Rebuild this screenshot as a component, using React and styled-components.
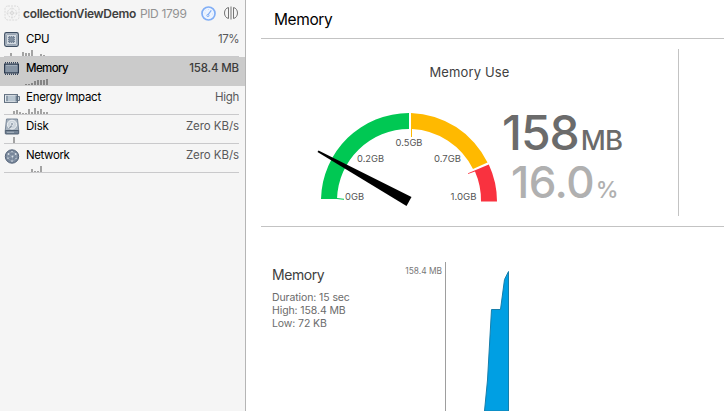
import React from "react";
import styled, { createGlobalStyle } from "styled-components";

const GlobalStyle = createGlobalStyle`
  * { box-sizing: border-box; }
  body { margin: 0; background: #fff; font-family: Inter, "Liberation Sans", sans-serif; overflow: hidden; }
  svg { display: block; }
`;

const Window = styled.div`
  display: grid;
  grid-template-columns: 246px 1fr;
  width: 724px;
  height: 411px;
  overflow: hidden;
  background: #fff;
`;

const Sidebar = styled.aside`
  background: #f5f5f5;
  border-right: 1px solid #b5b5b5;
`;

const ProcessHeader = styled.header`
  display: flex;
  align-items: center;
  height: 28px;
  padding: 0 6px 2px 4px;
  white-space: nowrap;
`;

const ProcessName = styled.strong`
  margin-left: 3px;
  font-size: 12px;
  font-weight: 600;
  letter-spacing: -0.33px;
  color: #404040;
`;

const ProcessId = styled.span`
  margin-left: 4px;
  font-size: 12px;
  letter-spacing: -0.33px;
  color: #929292;
`;

const HeaderActions = styled.div`
  display: flex;
  align-items: center;
  gap: 7px;
  margin-left: auto;
`;

const GaugeRow = styled.div`
  height: 29px;
  padding: 0 6px 0 4px;
  background: ${(p) => (p.$selected ? "#cbcbcb" : "transparent")};
`;

const RowBody = styled.div`
  display: grid;
  grid-template-columns: 22px 1fr auto;
  grid-template-rows: 22px 7px;
  height: 29px;
  border-bottom: 1px solid ${(p) => (p.$selected ? "transparent" : "#c9c9cb")};
`;

const RowIcon = styled.div`
  padding-top: ${(p) => p.$top}px;
  height: 22px;
`;

const RowLabel = styled.span`
  font-size: 11.5px;
  line-height: 23px;
  font-weight: ${(p) => (p.$selected ? 500 : 400)};
  letter-spacing: ${(p) => p.$spacing}px;
  color: #000;
`;

const RowValue = styled(RowLabel)`
  color: ${(p) => (p.$selected ? "#3c3c3c" : "#58585a")};
`;

const History = styled.svg`
  grid-column: 1 / -1;
  height: 6px;
`;

const Main = styled.main`
  display: flex;
  flex-direction: column;
  padding-left: 15px;
  min-width: 0;
`;

const TitleBar = styled.header`
  height: 39px;
  padding-left: 13px;
  border-bottom: 1px solid #c3c3c3;
  font-size: 15.5px;
  line-height: 39px;
  letter-spacing: -0.4px;
  color: #000;
`;

const Overview = styled.section`
  display: grid;
  grid-template-columns: 418px 1fr;
  height: 188px;
  padding: 10px 0;
  border-bottom: 1px solid #c3c3c3;
`;

const UsagePanel = styled.div`
  display: grid;
  grid-template-columns: 242px 1fr;
  grid-template-rows: 46px 1fr;
  border-right: 1px solid #c3c3c3;
`;

const PanelTitle = styled.h2`
  grid-column: 1 / -1;
  margin: 0;
  font-size: 13px;
  font-weight: 400;
  line-height: 46px;
  letter-spacing: 0.15px;
  text-align: center;
  color: #414141;
`;

const Readout = styled.div`
  display: flex;
  flex-direction: column;
  padding-top: 13px;
`;

const Figure = styled.div`
  display: flex;
  align-items: baseline;
  height: ${(p) => p.$line}px;
  margin-left: ${(p) => p.$indent}px;
  font-size: ${(p) => p.$size}px;
  font-weight: 450;
  line-height: ${(p) => p.$line}px;
  letter-spacing: ${(p) => p.$spacing}px;
  color: ${(p) => p.$color};
`;

const Unit = styled.span`
  margin-left: ${(p) => p.$gap}px;
  font-size: ${(p) => p.$size}px;
  letter-spacing: ${(p) => p.$spacing}px;
`;

const Timeline = styled.section`
  display: grid;
  grid-template-columns: 119px 54px 1fr;
  padding-top: 35px;
  padding-left: 11px;
  height: 184px;
`;

const Summary = styled.div`
  padding-top: 3px;
  font-size: 10.5px;
  line-height: 13px;
  letter-spacing: -0.1px;
  color: #6b6b6b;
`;

const SummaryTitle = styled.h3`
  margin: 0 0 6px;
  font-size: 14px;
  font-weight: 400;
  line-height: 20px;
  letter-spacing: -0.45px;
  color: #404040;
`;

const AxisLabel = styled.div`
  padding-right: 3px;
  font-size: 8.4px;
  line-height: 19px;
  text-align: right;
  white-space: nowrap;
  color: #777;
`;

const TargetIcon = () => (
  <svg width="16" height="18" viewBox="0 0 16 18" fill="none" stroke="#dadada">
    <rect x="1" y="2" width="14" height="14" rx="3" strokeDasharray="2 1" />
    <circle cx="8" cy="9" r="4.5" strokeDasharray="2 1" />
    <path d="M8 3v12M2 9h12" strokeWidth=".6" />
    <circle cx="8" cy="9" r="1.6" />
  </svg>
);

const DialIcon = () => (
  <svg width="15" height="15" viewBox="0 0 15 15" fill="none">
    <circle cx="7.5" cy="7.5" r="6.5" fill="#edf4ff" stroke="#81aef5" strokeWidth="1.7" />
    <path d="M10.3 4.4L7.1 8.7" stroke="#81aef5" strokeWidth="1.2" />
    <circle cx="6.9" cy="9.5" r="1.1" stroke="#81aef5" />
    <path d="M3.5 7h1M7.5 3v1M4.5 4.5l.6.6M11 8h1" stroke="#bdd4f8" strokeWidth=".7" />
  </svg>
);

const SplitIcon = () => (
  <svg width="16" height="14" viewBox="0 0 16 14" fill="none" stroke="#747474" strokeWidth="1">
    <path d="M5.500 1.500C3.200 2 1.500 4 1.500 7s1.700 5 4 5.500zM10.500 1.500c2.300.5 4 2.500 4 5.500s-1.700 5-4 5.500zM8 .5v13" />
  </svg>
);

const CpuIcon = () => (
  <svg width="15" height="15" viewBox="0 0 15 15">
    <rect x=".7" y=".7" width="13.600" height="13.600" rx="1.500" fill="#c4ced8" stroke="#3e4e62" strokeWidth="1.200" />
    <rect x="2.500" y="2.500" width="10" height="10" rx="1" fill="#d5dce3" stroke="#8290a0" strokeWidth=".7" />
    <path d="M4 5.500h7M4 7.500h7M4 9.500h7M5.500 4v7M7.500 4v7M9.500 4v7" stroke="#65758a" strokeWidth=".8" />
    <rect x="5" y="5" width="5" height="5" fill="#8290a0" stroke="#65758a" strokeWidth=".6" />
  </svg>
);

const MemoryIcon = () => (
  <svg width="15" height="13" viewBox="0 0 15 13">
    <path d="M1 .8h13M1 12.200h13" stroke="#34445a" strokeWidth="1.600" strokeDasharray="1 1" />
    <rect x=".6" y="2.100" width="13.800" height="8.800" fill="#8795a5" stroke="#2c3b50" strokeWidth="1.200" />
    <path d="M2 3.500h11" stroke="#a3afbc" />
  </svg>
);

const BatteryIcon = () => (
  <svg width="16" height="9" viewBox="0 0 16 9">
    <rect x=".5" y=".6" width="13" height="7.800" fill="#e7ecf0" stroke="#5c6b7c" />
    <rect x="2" y="1.800" width="2" height="5.400" fill="#8d9cab" />
    <rect x="4" y="1.800" width="7.500" height="5.400" fill="#b8c5d0" />
    <rect x="11.500" y="1.500" width="1.500" height="6" fill="#6f8092" />
    <path d="M14 2.500h1.500v4H14" fill="#c5d0da" stroke="#5c6b7c" strokeWidth=".9" />
  </svg>
);

const DiskIcon = () => (
  <svg width="16" height="17" viewBox="0 0 16 17">
    <path d="M2.500 1h11l1.300 12H1.200z" fill="#a8b3bf" stroke="#718092" strokeWidth=".9" />
    <rect x="1.300" y="12.500" width="13.400" height="3.500" rx=".6" fill="#758496" stroke="#47576a" strokeWidth=".9" />
    <ellipse cx="8" cy="6.600" rx="4.600" ry="4.400" fill="#ccd4dc" stroke="#edf0f3" strokeWidth="1" />
    <circle cx="8" cy="6" r="1.500" fill="#8b98a6" stroke="#f1f4f7" strokeWidth=".8" />
    <path d="M5.200 10.200l2.600-2.400" stroke="#5a6878" />
    <path d="M3 14.300h7" stroke="#b8c2cc" strokeWidth=".8" />
  </svg>
);

const NetworkIcon = () => (
  <svg width="16" height="15" viewBox="0 0 16 15">
    <circle cx="8" cy="7.500" r="6.700" fill="#77869a" stroke="#56657a" strokeWidth="1" />
    <path d="M4 5l4-2.500L12 5l.5 4.500L8 12.500 3.500 9z M4 5l4.500 2.500L12 5M8.500 7.500L8 12.500M8.500 7.500L3.500 9" fill="none" stroke="#9daab8" strokeWidth=".6" />
    <g fill="#d9e0e7">
      <circle cx="4.500" cy="5" r=".9" />
      <circle cx="8" cy="2.700" r=".7" />
      <circle cx="11.700" cy="5" r=".9" />
      <circle cx="8.500" cy="7.500" r=".9" />
      <circle cx="4" cy="9.300" r=".7" />
      <circle cx="8" cy="12" r=".8" />
      <circle cx="12" cy="9.500" r=".6" />
    </g>
  </svg>
);

const gauges = [
  { label: "CPU", value: "17%", icon: CpuIcon, top: 4, ls: -0.4, vs: -0.5, bars: [[10, 3], [22, 4], [25, 3], [28, 3], [31, 6], [40, 2], [43, 1]] },
  { label: "Memory", value: "158.4 MB", icon: MemoryIcon, top: 5, ls: -0.6, vs: -0.15, selected: true, bars: [[25, 1], [28, 1], [31, 2], [34, 4], [37, 5], [40, 5], [43, 5], [46, 6]] },
  { label: "Energy Impact", value: "High", icon: BatteryIcon, top: 8, ls: -0.27, vs: -0.3, bars: [[13, 3], [16, 4], [19, 2], [22, 1], [25, 1], [28, 5], [31, 2], [34, 6], [37, 3], [40, 5], [43, 2], [46, 2]] },
  { label: "Disk", value: "Zero KB/s", icon: DiskIcon, top: 3, ls: -0.2, vs: -0.07, bars: [[13, 6]] },
  { label: "Network", value: "Zero KB/s", icon: NetworkIcon, top: 5, ls: -0.4, vs: -0.07, bars: [[31, 3], [34, 1], [37, 1], [40, 6]] },
];

const MemoryGauge = () => (
  <svg width="242" height="120" viewBox="261 95 242 120">
    <path d="M321 199A88 88 0 0 1 409 113V129A72 72 0 0 0 337 199Z" fill="#00c853" />
    <path d="M337 198.500L344 199.300" stroke="#00c853" />
    <path d="M411 113A88 88 0 0 1 487.500 162.500L473 169A72 72 0 0 0 412 129V137H411Z" fill="#ffb900" />
    <path d="M488.800 164.500A88 88 0 0 1 497 201.500H481A72 72 0 0 0 475 171.500L468 174V173.200Z" fill="#f9323f" />
    <path d="M318.500 150.500L411.500 197L406.500 206L317.500 152Z" fill="#000" />
    <g fontSize="9" fill="#555">
      <text x="345" y="200" textLength="19" lengthAdjust="spacingAndGlyphs">0GB</text>
      <text x="357" y="162" textLength="27" lengthAdjust="spacingAndGlyphs">0.2GB</text>
      <text x="395.500" y="146" textLength="27" lengthAdjust="spacingAndGlyphs">0.5GB</text>
      <text x="434" y="162" textLength="27" lengthAdjust="spacingAndGlyphs">0.7GB</text>
      <text x="450.500" y="200" textLength="26" lengthAdjust="spacingAndGlyphs">1.0GB</text>
    </g>
  </svg>
);

const MemoryChart = () => (
  <svg width="279" height="149" viewBox="445 262 279 149">
    <path d="M445.500 262V411" stroke="#9e9e9e" />
    <path d="M484.500 411L487.500 380L491.500 309.500H500.500L504.500 279.500L508.500 271.500V411Z" fill="#009fe3" stroke="#167eab" strokeWidth="1" />
  </svg>
);

export default function App() {
  return (
    <Window>
      <GlobalStyle />
      <Sidebar>
        <ProcessHeader>
          <TargetIcon />
          <ProcessName>collectionViewDemo</ProcessName>
          <ProcessId>PID 1799</ProcessId>
          <HeaderActions>
            <DialIcon />
            <SplitIcon />
          </HeaderActions>
        </ProcessHeader>
        {gauges.map(({ label, value, icon: Icon, top, ls, vs, selected, bars }) => (
          <GaugeRow key={label} $selected={selected}>
            <RowBody $selected={selected}>
              <RowIcon $top={top}><Icon /></RowIcon>
              <RowLabel $selected={selected} $spacing={ls}>{label}</RowLabel>
              <RowValue $selected={selected} $spacing={vs}>{value}</RowValue>
              <History width="60" viewBox="4 0 60 6">
                {bars.map(([x, h]) => (
                  <rect key={x} x={x} y={6 - h} width="2" height={h} fill={selected ? "#858585" : "#a3a3a3"} />
                ))}
              </History>
            </RowBody>
          </GaugeRow>
        ))}
      </Sidebar>
      <Main>
        <TitleBar>Memory</TitleBar>
        <Overview>
          <UsagePanel>
            <PanelTitle>Memory Use</PanelTitle>
            <MemoryGauge />
            <Readout>
              <Figure $indent={-1} $size={48} $line={49} $spacing={-1} $color="#6b6b6b">
                158<Unit $gap={2} $size={27.5} $spacing={-1}>MB</Unit>
              </Figure>
              <Figure $indent={8} $size={44} $line={50} $spacing={-0.5} $color="#b0b0b0">
                16.0<Unit $gap={1.5} $size={23} $spacing={0}>%</Unit>
              </Figure>
            </Readout>
          </UsagePanel>
        </Overview>
        <Timeline>
          <Summary>
            <SummaryTitle>Memory</SummaryTitle>
            <div>Duration: 15 sec</div>
            <div>High: 158.4 MB</div>
            <div>Low: 72 KB</div>
          </Summary>
          <AxisLabel>158.4 MB</AxisLabel>
          <MemoryChart />
        </Timeline>
      </Main>
    </Window>
  );
}
